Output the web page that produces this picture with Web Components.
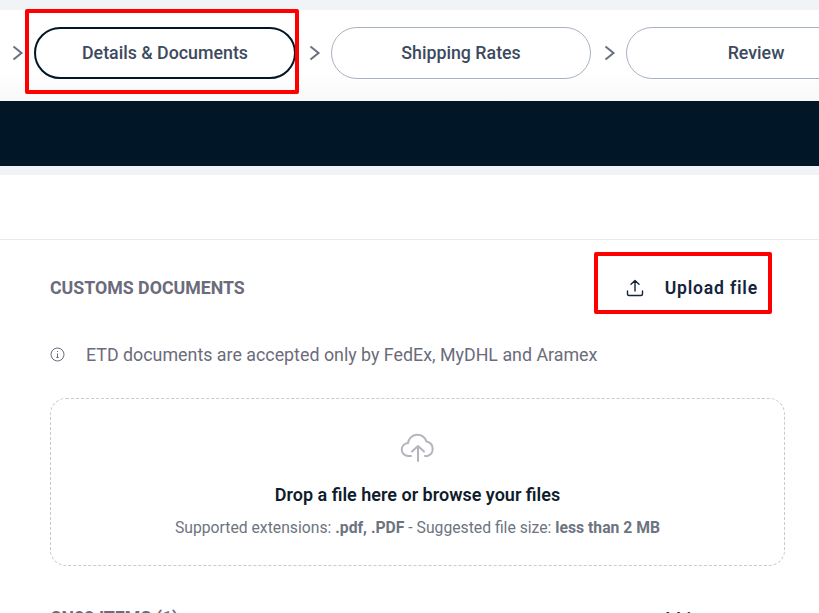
<!DOCTYPE html>
<html lang="en">
<head>
<meta charset="utf-8">
<title>Customs documents</title>
<style>
  html, body { margin: 0; height: 613px; overflow: hidden; background: #fff; }
  body { font-family: Roboto, "Liberation Sans", sans-serif; position: relative; }
</style>
</head>
<body>
<template id="tpl-step-pill">
  <style>
    :host { display: block; flex: none; width: 260px; height: 52px; box-sizing: border-box;
      border: 1px solid #a8b3c0; border-radius: 26px; background: #fff; }
    :host([active]) { width: 262px; border: 2px solid #011627; }
    .label { display: flex; align-items: center; justify-content: center; height: 100%; box-sizing: border-box; padding-bottom: 2px;
      font-size: 17.8px; font-weight: 500; color: #3c4a5e; }
  </style>
  <div class="label"><slot></slot></div>
</template>

<template id="tpl-step-bar">
  <style>
    :host { display: block; height: 91px; margin-top: 10px; overflow: hidden; box-sizing: border-box;
      background: linear-gradient(#fff 70%, #f8f8f8); }
    .row { display: flex; align-items: center; padding: 17px 0 0 8px; gap: 9px; }
  </style>
  <div class="row"><slot></slot></div>
</template>

<template id="tpl-step-arrow">
  <style>
    :host { display: block; flex: none; width: 17px; height: 16px; }
    svg { display: block; }
  </style>
  <svg width="17" height="16" viewBox="0 0 17 16" fill="none" stroke="#68717d" stroke-width="2"><path d="M5.5 1.5L13.5 8l-8 6.5"/></svg>
</template>

<template id="tpl-doc-section">
  <style>
    :host { display: block; border-top: 1px solid #e9ebef; margin-top: 64px; padding: 0 34px 0 50px; }
    .head { display: flex; align-items: center; justify-content: space-between; height: 95px; padding-right: 27px; }
    h2 { margin: 0; font-size: 17.75px; font-weight: 700; color: #6b6b7b; }
    .upload { display: flex; align-items: center; gap: 21px; font-size: 17.6px; font-weight: 600; letter-spacing: .8px; color: #14243a; }
    svg { display: block; }
    .note { display: flex; align-items: center; gap: 21px; height: 20px; margin-top: 9px; font-size: 17.83px; color: #6b6b7b; }
    .drop { height: 168px; box-sizing: border-box; margin-top: 34px; border: 1px dashed #c9c9cf; border-radius: 16px;
      display: flex; flex-direction: column; align-items: center; padding-top: 33px; }
    .title { margin-top: 22px; font-size: 18px; font-weight: 600; color: #0f1c2b; }
    .hint { margin-top: 13px; font-size: 15.73px; color: #6d7480; }
    b { font-weight: 700; }
    .next { display: flex; justify-content: space-between; margin-top: 42px; padding-right: 60px; font-size: 17.75px; font-weight: 700; color: #6b6b7b; }
    .next span:last-child { margin-top: 2px; font-size: 17.6px; font-weight: 600; letter-spacing: .8px; color: #14243a; }
  </style>
  <div class="head">
    <h2>CUSTOMS DOCUMENTS</h2>
    <div class="upload">
      <svg width="18" height="18" viewBox="0 0 18 18" fill="none" stroke="#14243a" stroke-width="1.4" stroke-linecap="round" stroke-linejoin="round"><path d="M1.5 12v3a1.5 1.5 0 0 0 1.5 1.5h12a1.5 1.5 0 0 0 1.5-1.5v-3M9 12V1.5M5 5.2L9 1.5l4 3.7"/></svg>
      <span>Upload file</span>
    </div>
  </div>
  <div class="note">
    <svg width="15" height="15" viewBox="0 0 15 15" fill="none" stroke="#6b6b7b"><circle cx="7.5" cy="7.5" r="6.5"/><path d="M7.5 6.5v4M6.3 10.5h2.4M7.5 4v1"/></svg>
    <span>ETD documents are accepted only by FedEx, MyDHL and Aramex</span>
  </div>
  <div class="drop">
    <svg width="36" height="30" viewBox="0 0 36 30" fill="none" stroke="#b4b4be" stroke-width="2" stroke-linecap="round" stroke-linejoin="round"><path d="M11 24H8.5A6.5 6.5 0 0 1 8 11 9.5 9.5 0 0 1 26.5 9.5 7.5 7.5 0 0 1 27.5 24H25M18 29V14M12 19.5L18 14l6 5.5"/></svg>
    <div class="title">Drop a file here or browse your files</div>
    <div class="hint">Supported extensions: <b>.pdf, .PDF</b> - Suggested file size: <b>less than 2 MB</b></div>
  </div>
  <div class="next"><span>CN23 ITEMS (1)</span><span>Add item</span></div>
</template>

<template id="tpl-app-frame">
  <style>
    :host { display: block; width: 819px; height: 613px; overflow: hidden; background: #fff; }
    .top { background: #f0f4f7; height: 175px; display: flex; flex-direction: column; }
    .navy { height: 65px; background: #011627; }
  </style>
  <div class="top">
    <slot name="steps"></slot>
    <div class="navy"></div>
  </div>
  <slot></slot>
</template>

<template id="tpl-red-box">
  <style>
    :host { display: block; position: absolute; box-sizing: border-box; border: 4px solid #fe0000; border-radius: 2px; }
  </style>
</template>

<app-frame>
  <step-bar slot="steps">
    <step-arrow></step-arrow>
    <step-pill active>Details &amp; Documents</step-pill>
    <step-arrow></step-arrow>
    <step-pill>Shipping Rates</step-pill>
    <step-arrow></step-arrow>
    <step-pill>Review</step-pill>
  </step-bar>
  <doc-section></doc-section>
</app-frame>
<red-box style="left:25px;top:9px;width:274px;height:85px"></red-box>
<red-box style="left:594px;top:252px;width:178px;height:62px"></red-box>

<script>
  // Every element only clones its own template into an open shadow root
  const define = (name, tplId) => customElements.define(name, class extends HTMLElement {
    constructor() {
      super();
      this.attachShadow({ mode: "open" }).append(document.getElementById(tplId).content.cloneNode(true));
    }
  });
  define("step-pill", "tpl-step-pill");
  define("step-bar", "tpl-step-bar");
  define("step-arrow", "tpl-step-arrow");
  define("doc-section", "tpl-doc-section");
  define("app-frame", "tpl-app-frame");
  define("red-box", "tpl-red-box");
</script>
</body>
</html>
